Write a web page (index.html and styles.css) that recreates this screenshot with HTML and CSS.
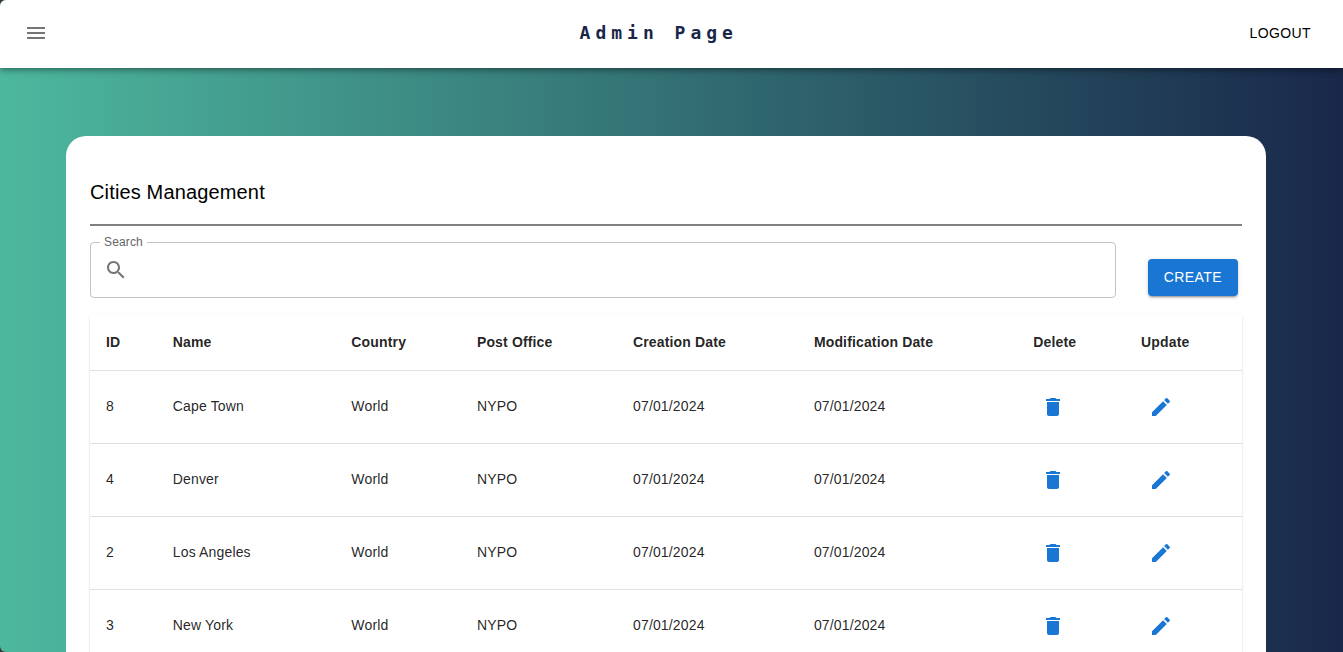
FILE: index.html
```html
<!DOCTYPE html>
<html lang="en">
<head>
<meta charset="utf-8">
<meta name="viewport" content="width=device-width, initial-scale=1">
<title>Admin Page</title>
<link rel="stylesheet" href="styles.css">
</head>
<body>
<svg class="sprite" aria-hidden="true">
  <symbol id="menu" viewBox="0 0 24 24"><path d="M3 18h18v-2H3v2zm0-5h18v-2H3v2zm0-7v2h18V6H3z"/></symbol>
  <symbol id="search" viewBox="0 0 24 24"><path d="M15.5 14h-.79l-.28-.27C15.41 12.59 16 11.11 16 9.5 16 5.91 13.09 3 9.5 3S3 5.91 3 9.5 5.91 16 9.5 16c1.61 0 3.09-.59 4.23-1.57l.27.28v.79l5 4.99L20.49 19l-4.99-5zm-6 0C7.01 14 5 11.99 5 9.5S7.01 5 9.5 5 14 7.01 14 9.5 11.99 14 9.5 14z"/></symbol>
  <symbol id="delete" viewBox="0 0 24 24"><path d="M6 19c0 1.1.9 2 2 2h8c1.1 0 2-.9 2-2V7H6v12zM19 4h-3.5l-1-1h-5l-1 1H5v2h14V4z"/></symbol>
  <symbol id="edit" viewBox="0 0 24 24"><path d="M3 17.25V21h3.75L17.81 9.94l-3.75-3.75L3 17.25zM20.71 7.04c.39-.39.39-1.02 0-1.41l-2.34-2.34a.9959.9959 0 0 0-1.41 0l-1.83 1.83 3.75 3.75 1.83-1.83z"/></symbol>
</svg>
<div class="app">
  <header class="app-bar">
    <button class="icon-button menu-button" type="button" aria-label="Open menu"><svg class="icon"><use href="#menu"/></svg></button>
    <h1 class="brand">Admin Page</h1>
    <button class="text-button" type="button">LOGOUT</button>
  </header>
  <main class="content">
    <section class="card">
      <h2 class="card-title">Cities Management</h2>
      <hr class="divider">
      <div class="toolbar">
        <fieldset class="field">
          <legend class="field-legend"><label for="city-search">Search</label></legend>
          <div class="field-row">
            <svg class="icon"><use href="#search"/></svg>
            <input class="field-input" id="city-search" type="text">
          </div>
        </fieldset>
        <button class="create-button" type="button">CREATE</button>
      </div>
      <div class="table-paper">
        <table class="table">
          <colgroup>
            <col class="col-id"><col class="col-name"><col class="col-country"><col class="col-office"><col class="col-created"><col class="col-modified"><col class="col-delete"><col class="col-update">
          </colgroup>
          <thead>
            <tr><th>ID</th><th>Name</th><th>Country</th><th>Post Office</th><th>Creation Date</th><th>Modification Date</th><th>Delete</th><th>Update</th></tr>
          </thead>
          <tbody>
            <tr><td>8</td><td>Cape Town</td><td>World</td><td>NYPO</td><td>07/01/2024</td><td>07/01/2024</td>
              <td class="action-cell"><button class="icon-button row-action" type="button" aria-label="Delete Cape Town"><svg class="icon"><use href="#delete"/></svg></button></td>
              <td class="action-cell"><button class="icon-button row-action" type="button" aria-label="Update Cape Town"><svg class="icon"><use href="#edit"/></svg></button></td></tr>
            <tr><td>4</td><td>Denver</td><td>World</td><td>NYPO</td><td>07/01/2024</td><td>07/01/2024</td>
              <td class="action-cell"><button class="icon-button row-action" type="button" aria-label="Delete Denver"><svg class="icon"><use href="#delete"/></svg></button></td>
              <td class="action-cell"><button class="icon-button row-action" type="button" aria-label="Update Denver"><svg class="icon"><use href="#edit"/></svg></button></td></tr>
            <tr><td>2</td><td>Los Angeles</td><td>World</td><td>NYPO</td><td>07/01/2024</td><td>07/01/2024</td>
              <td class="action-cell"><button class="icon-button row-action" type="button" aria-label="Delete Los Angeles"><svg class="icon"><use href="#delete"/></svg></button></td>
              <td class="action-cell"><button class="icon-button row-action" type="button" aria-label="Update Los Angeles"><svg class="icon"><use href="#edit"/></svg></button></td></tr>
            <tr><td>3</td><td>New York</td><td>World</td><td>NYPO</td><td>07/01/2024</td><td>07/01/2024</td>
              <td class="action-cell"><button class="icon-button row-action" type="button" aria-label="Delete New York"><svg class="icon"><use href="#delete"/></svg></button></td>
              <td class="action-cell"><button class="icon-button row-action" type="button" aria-label="Update New York"><svg class="icon"><use href="#edit"/></svg></button></td></tr>
          </tbody>
        </table>
      </div>
    </section>
  </main>
</div>
</body>
</html>
```

FILE: styles.css
```css
*, *::before, *::after { box-sizing: border-box; }

body {
  margin: 0;
  background: #383838;
  color: rgba(0, 0, 0, 0.87);
  font: 400 14px/24px "Liberation Sans", Arial, sans-serif;
  letter-spacing: 0.01071em;
}

button, input { font: inherit; letter-spacing: inherit; }
button { border: 0; background: none; cursor: pointer; }

.sprite { display: none; }
.icon { display: block; flex: none; width: 24px; height: 24px; fill: currentColor; }

.app {
  display: flex;
  flex-direction: column;
  height: 100vh;
  overflow: hidden;
  border-radius: 6px 0 0 6px;
  background: linear-gradient(to right, #4db89e, #19284a);
}

.app-bar {
  display: flex;
  flex: none;
  align-items: center;
  padding: 9px 24px 11px 12px;
  z-index: 1;
  background: #fff;
  box-shadow: 0 2px 4px -1px rgba(0, 0, 0, 0.2), 0 4px 5px rgba(0, 0, 0, 0.14), 0 1px 10px rgba(0, 0, 0, 0.12);
}

.icon-button { display: block; padding: 8px; border-radius: 50%; }
.menu-button { margin-right: 16px; padding: 12px; color: #757575; }

.brand {
  flex: 1;
  margin: 0;
  color: #19284a;
  font: 700 18px/32px "DejaVu Sans Mono", monospace;
  letter-spacing: 5px;
  text-align: center;
}

.text-button {
  padding: 6px 8px;
  color: #000;
  letter-spacing: 0.02857em;
}

.content {
  flex: 1;
  min-height: 0;
  overflow-y: auto;
  padding: 68px 11px 0 0;
  scrollbar-width: none;
}

.card {
  max-width: 1200px;
  margin: 0 auto;
  padding: 40px 24px 24px;
  border-radius: 20px;
  background: #fff;
}

.card-title {
  margin: 0;
  color: #000;
  font-size: 20px;
  font-weight: 400;
  line-height: 32px;
  letter-spacing: 0.0075em;
}

.divider { height: 2px; margin: 16px 0 10px; border: 0; background: #808080; }

.toolbar { display: flex; align-items: flex-end; gap: 32px; margin-bottom: 16px; }

.field {
  flex: 1;
  min-width: 0;
  margin: 0;
  padding: 0 14px 15px 9px;
  border: 1px solid #c4c4c4;
  border-radius: 4px;
}
.field-legend { padding: 0 4px; color: #666; font-size: 12px; line-height: 12px; }
.field-row { display: flex; align-items: center; gap: 8px; padding: 10px 0 0 4px; color: #757575; }
.field-input {
  flex: 1;
  min-width: 0;
  height: 24px;
  padding: 0;
  border: 0;
  outline: 0;
  background: none;
  color: #212121;
  font-size: 16px;
}

.create-button {
  margin: 0 4px 2px 0;
  padding: 6px 16px 7px;
  border-radius: 4px;
  background: #1976d2;
  color: #fff;
  letter-spacing: 0.02857em;
  box-shadow: 0 3px 1px -2px rgba(0, 0, 0, 0.2), 0 2px 2px rgba(0, 0, 0, 0.14), 0 1px 5px rgba(0, 0, 0, 0.12);
}

.table-paper {
  border-radius: 4px;
  background: #fff;
  box-shadow: 0 2px 1px -1px rgba(0, 0, 0, 0.2), 0 1px 1px rgba(0, 0, 0, 0.14), 0 1px 3px rgba(0, 0, 0, 0.12);
}

.table { width: 100%; border-collapse: separate; border-spacing: 0; table-layout: fixed; }
.table th, .table td { padding: 16px; border-bottom: 1px solid #e0e0e0; text-align: left; }
.table th { font-weight: 700; }
.table td { padding: 15px 16px 17px; }
.table .action-cell { padding: 16px; }
.col-id { width: 5.8%; }
.col-name { width: 15.5%; }
.col-country { width: 10.9%; }
.col-office { width: 13.55%; }
.col-created { width: 15.7%; }
.col-modified { width: 19.05%; }
.col-delete { width: 9.35%; }
.col-update { width: 10.15%; }
.row-action { color: #1976d2; }
```
